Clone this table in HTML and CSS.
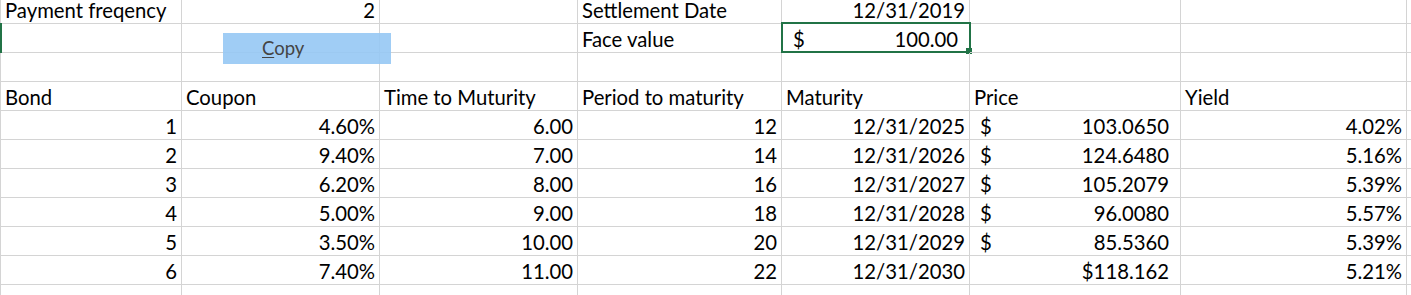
FILE: index.html
```html
<!DOCTYPE html>
<html>
<head>
<meta charset="utf-8">
<link rel="stylesheet" href="styles.css">
</head>
<body>
<div class="sheet">
  <div class="grid">
    <!-- row 1 -->
    <div class="c l">Payment freqency</div>
    <div class="c r">2</div>
    <div class="c"></div>
    <div class="c l">Settlement Date</div>
    <div class="c r">12/31/2019</div>
    <div class="c"></div>
    <div class="c"></div>
    <div class="c"></div>
    <!-- row 2 -->
    <div class="c rowsel"></div>
    <div class="c"></div>
    <div class="c"></div>
    <div class="c l">Face value</div>
    <div class="c acc face"><span>$</span><span>100.00</span><div class="selbox"><div class="handle"></div></div></div>
    <div class="c"></div>
    <div class="c"></div>
    <div class="c"></div>
    <!-- row 3 -->
    <div class="c"></div><div class="c"></div><div class="c"></div><div class="c"></div>
    <div class="c"></div><div class="c"></div><div class="c"></div><div class="c"></div>
    <!-- row 4 -->
    <div class="c l">Bond</div>
    <div class="c l">Coupon</div>
    <div class="c l">Time to Muturity</div>
    <div class="c l">Period to maturity</div>
    <div class="c l">Maturity</div>
    <div class="c l">Price</div>
    <div class="c l">Yield</div>
    <div class="c"></div>
    <!-- data -->
    <div class="c r">1</div><div class="c r">4.60%</div><div class="c r">6.00</div><div class="c r">12</div><div class="c r">12/31/2025</div><div class="c acc"><span>$</span><span>103.0650</span></div><div class="c r">4.02%</div><div class="c"></div>
    <div class="c r">2</div><div class="c r">9.40%</div><div class="c r">7.00</div><div class="c r">14</div><div class="c r">12/31/2026</div><div class="c acc"><span>$</span><span>124.6480</span></div><div class="c r">5.16%</div><div class="c"></div>
    <div class="c r">3</div><div class="c r">6.20%</div><div class="c r">8.00</div><div class="c r">16</div><div class="c r">12/31/2027</div><div class="c acc"><span>$</span><span>105.2079</span></div><div class="c r">5.39%</div><div class="c"></div>
    <div class="c r">4</div><div class="c r">5.00%</div><div class="c r">9.00</div><div class="c r">18</div><div class="c r">12/31/2028</div><div class="c acc"><span>$</span><span>96.0080</span></div><div class="c r">5.57%</div><div class="c"></div>
    <div class="c r">5</div><div class="c r">3.50%</div><div class="c r">10.00</div><div class="c r">20</div><div class="c r">12/31/2029</div><div class="c acc"><span>$</span><span>85.5360</span></div><div class="c r">5.39%</div><div class="c"></div>
    <div class="c r">6</div><div class="c r">7.40%</div><div class="c r">11.00</div><div class="c r">22</div><div class="c r">12/31/2030</div><div class="c acc"><span></span><span>$118.162</span></div><div class="c r">5.21%</div><div class="c"></div>
    <!-- last partial row -->
    <div class="c"></div><div class="c"></div><div class="c"></div><div class="c"></div>
    <div class="c"></div><div class="c"></div><div class="c"></div><div class="c"></div>
  </div>
  <button class="copy"><span class="u">C</span>opy</button>
</div>
</body>
</html>
```

FILE: styles.css
```css
html, body {
  margin: 0;
  padding: 0;
  background: #ffffff;
  overflow: hidden;
}
.sheet {
  position: relative;
  width: 1411px;
  height: 295px;
  overflow: hidden;
  font-family: "Lato", "Carlito", "Liberation Sans", sans-serif;
  font-size: 20.3px;
  color: #000000;
}
.grid {
  display: grid;
  grid-template-columns: 181px 198px 198px 204px 188px 211px 226px 1fr;
  grid-template-rows: 24px repeat(9, 29px) 20px;
  border-left: 1px solid #d4d4d4;
}
.c {
  box-sizing: border-box;
  border-right: 1px solid #d4d4d4;
  border-bottom: 1px solid #d4d4d4;
  display: flex;
  align-items: flex-end;
  padding: 0 4px 4px 5px;
  line-height: 18px;
  white-space: nowrap;
  position: relative;
}
.c.l { justify-content: flex-start; padding-left: 4px; }
.c.r { justify-content: flex-end; padding-right: 4px; }
.c.acc {
  justify-content: space-between;
  padding-left: 10px;
  padding-right: 11px;
}
.c.face { padding-left: 11px; }
.rowsel::before {
  content: "";
  position: absolute;
  left: -1px;
  top: -1px;
  width: 2px;
  height: 30px;
  background: #217346;
}
.selbox {
  position: absolute;
  left: -1px;
  top: -2px;
  width: 190px;
  height: 31px;
  box-sizing: border-box;
  border: 2px solid #217346;
  pointer-events: none;
}
.handle {
  position: absolute;
  right: -3px;
  bottom: -3px;
  width: 6px;
  height: 6px;
  background: #217346;
}
.copy {
  position: absolute;
  left: 223px;
  top: 33px;
  width: 168px;
  height: 31px;
  margin: 0;
  border: none;
  background: rgba(150, 200, 244, 0.9);
  font-family: "Lato", "Carlito", "Liberation Sans", sans-serif;
  font-size: 18.5px;
  color: #444444;
  text-align: left;
  padding: 0 0 0 39px;
  line-height: 31px;
}
.copy .u { text-decoration: underline; text-underline-offset: 2px; }
```
